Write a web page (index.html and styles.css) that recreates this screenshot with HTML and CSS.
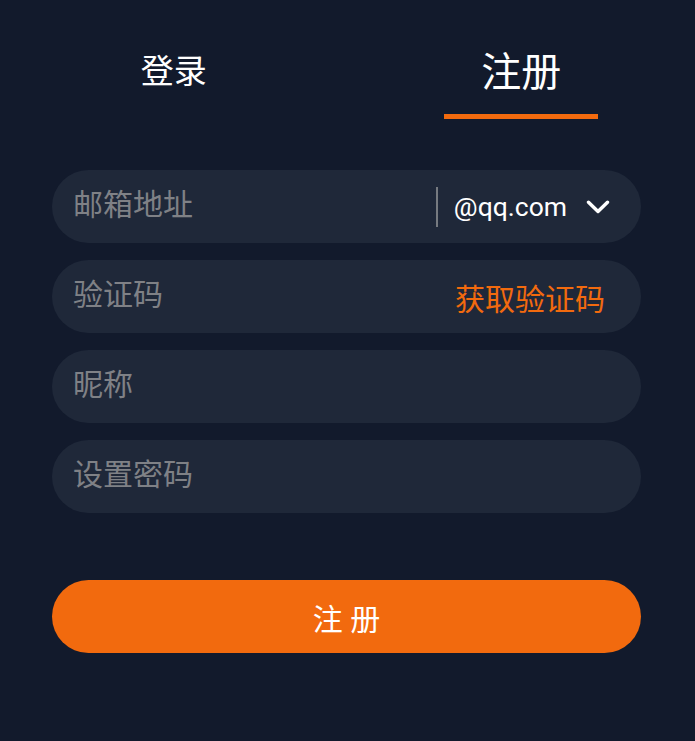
FILE: index.html
```html
<!DOCTYPE html>
<html lang="zh-CN">
<head>
<meta charset="utf-8">
<title>注册</title>
<link rel="stylesheet" href="styles.css">
</head>
<body>
<div class="page">
  <div class="tabs">
    <div class="tab">
      <div class="tab-label">登录</div>
      <div class="tab-bar"></div>
    </div>
    <div class="tab active">
      <div class="tab-label">注册</div>
      <div class="tab-bar"></div>
    </div>
  </div>
  <form class="form">
    <div class="field">
      <input class="field-input" type="text" placeholder="邮箱地址">
      <span class="divider"></span>
      <span class="domain">@qq.com</span>
      <svg class="chevron" width="24" height="14" viewBox="0 0 24 14"><polyline points="2.5,2.2 12,11.5 21.5,2.2" fill="none" stroke="#ffffff" stroke-width="3.4" stroke-linecap="round" stroke-linejoin="round"/></svg>
    </div>
    <div class="field field-code">
      <input class="field-input" type="text" placeholder="验证码">
      <span class="get-code">获取验证码</span>
    </div>
    <div class="field">
      <input class="field-input" type="text" placeholder="昵称">
    </div>
    <div class="field">
      <input class="field-input" type="password" placeholder="设置密码">
    </div>
    <button class="submit" type="button">注 册</button>
  </form>
</div>
</body>
</html>
```
FILE: styles.css
```css
* { box-sizing: border-box; }
html, body {
  margin: 0;
  padding: 0;
  background: #121a2c;
}
body {
  font-family: Roboto, "Noto Sans CJK SC", sans-serif;
  color: #ffffff;
  width: 695px;
  min-height: 741px;
}
.page {
  padding-top: 39px;
}
.tabs {
  display: flex;
}
.tab {
  flex: 1;
  display: flex;
  flex-direction: column;
  align-items: center;
}
.tab-label {
  height: 60px;
  line-height: 60px;
  font-family: "Noto Sans CJK SC", sans-serif;
  font-size: 33px;
  color: #ffffff;
}
.tab.active .tab-label {
  font-size: 40px;
}
.tab-bar {
  width: 154px;
  height: 5px;
  margin-top: 15px;
  background: transparent;
}
.tab.active .tab-bar {
  background: #f26a0e;
}
.form {
  margin: 51px 54px 0 52px;
  display: flex;
  flex-direction: column;
  gap: 17px;
}
.field {
  height: 73px;
  border-radius: 37px;
  background: #1f2839;
  display: flex;
  align-items: center;
  padding: 0 31px 0 21px;
}
.field-code {
  padding-right: 36px;
}
.field-input {
  flex: 1;
  min-width: 0;
  border: none;
  outline: none;
  background: transparent;
  padding: 0;
  margin: 0 0 9px 0;
  font-family: "Noto Sans CJK SC", sans-serif;
  font-size: 30px;
  color: #ffffff;
}
.field-input::placeholder {
  color: #7f8186;
}
.divider {
  width: 2px;
  height: 40px;
  background: #767a80;
  margin-right: 16px;
}
.domain {
  font-family: Roboto, sans-serif;
  font-size: 26.5px;
  color: #ffffff;
  margin-right: 19px;
}
.chevron {
  display: block;
}
.get-code {
  font-family: "Noto Sans CJK SC", sans-serif;
  font-size: 30px;
  color: #f26a0e;
}
.submit {
  margin-top: 50px;
  height: 73px;
  border: none;
  border-radius: 37px;
  background: #f26a0e;
  color: #ffffff;
  font-family: Roboto, "Noto Sans CJK SC", sans-serif;
  font-size: 30px;
  display: flex;
  align-items: center;
  justify-content: center;
  padding: 0;
  cursor: pointer;
}
```
